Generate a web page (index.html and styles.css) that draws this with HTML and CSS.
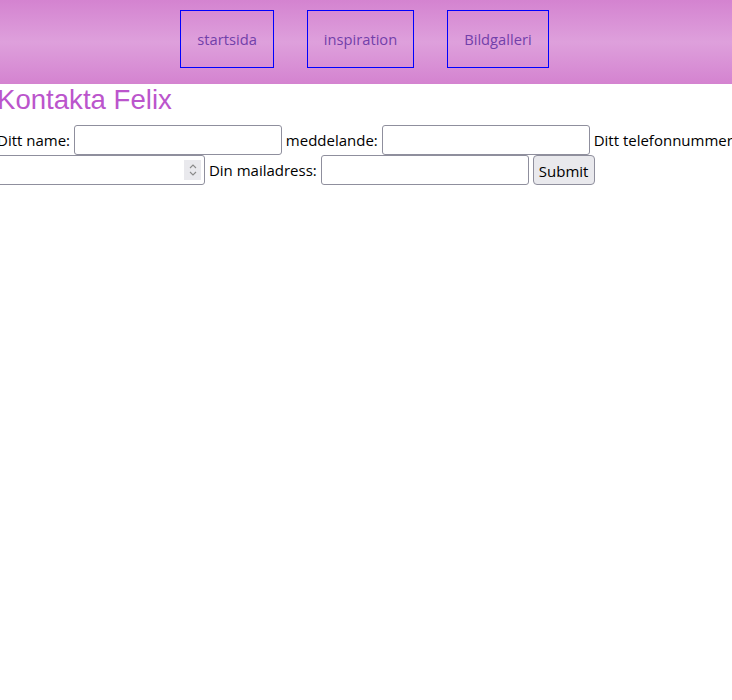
FILE: index.html
```html
<!DOCTYPE html>
<html lang="sv">
<head>
<meta charset="utf-8">
<title>Kontakta Felix</title>
<link rel="stylesheet" href="styles.css">
</head>
<body>
<nav class="topnav">
  <a class="navlink" href="#">startsida</a>
  <a class="navlink" href="#">inspiration</a>
  <a class="navlink" href="#">Bildgalleri</a>
</nav>
<main class="content">
  <h1 class="title">Kontakta Felix</h1>
  <form class="contact">
    <label class="lbl">Ditt name:</label> <input class="field" type="text">
    <label class="lbl">meddelande:</label> <input class="field" type="text">
    <label class="lbl">Ditt telefonnummer:</label> <span class="numwrap"><input class="field num" type="text"><span class="spin"><svg width="10" height="16" viewBox="0 0 10 16"><path d="M2 6 L5 3 L8 6" fill="none" stroke="#8a8a8a" stroke-width="1.1"/><path d="M2 10 L5 13 L8 10" fill="none" stroke="#8a8a8a" stroke-width="1.1"/></svg></span></span>
    <label class="lbl">Din mailadress:</label> <input class="field" type="text">
    <button class="btn" type="button">Submit</button>
  </form>
</main>
</body>
</html>
```
FILE: styles.css
```css
html { overflow: hidden; }
body {
  margin: 0;
  font-family: "Open Sans", "Noto Sans", sans-serif;
  background: #fff;
}
.topnav {
  height: 84px;
  display: flex;
  justify-content: center;
  align-items: flex-start;
  gap: 33px;
  padding-top: 10px;
  box-sizing: border-box;
  background: linear-gradient(to bottom, #d483d0 0%, #dea0dc 50%, #d483d0 100%);
  margin-left: -3px;
}
.navlink {
  display: block;
  border: 1px solid #0000ff;
  height: 58px;
  box-sizing: border-box;
  padding: 0 16px;
  line-height: 56px;
  font-size: 14.7px;
  color: #7240aa;
  text-decoration: none;
}
.content {
  margin-left: -3px;
}
.title {
  margin: 0;
  font-family: "Liberation Sans", Arial, sans-serif;
  font-weight: normal;
  font-size: 27.6px;
  line-height: 32px;
  color: #bb55cc;
}
.contact {
  width: 770px;
  margin-top: 9px;
  font-size: 15px;
  line-height: 30px;
  color: #000;
}
.field {
  width: 208px;
  height: 30px;
  box-sizing: border-box;
  border: 1px solid #8f8f9d;
  border-radius: 3px;
  vertical-align: top;
  font: inherit;
  margin: 0;
  padding: 0 4px;
}
.numwrap {
  display: inline-block;
  position: relative;
  vertical-align: top;
  height: 30px;
  line-height: 0;
}
.spin {
  position: absolute;
  right: 4px;
  top: 5px;
  width: 17px;
  height: 20px;
  background: #e9e9ed;
  display: flex;
  align-items: center;
  justify-content: center;
}
.btn {
  height: 30px;
  width: 62px;
  padding: 0;
  font: inherit;
  font-size: 15px;
  background: #e9e9ed;
  border: 1px solid #8f8f9d;
  border-radius: 4px;
  vertical-align: top;
  color: #000;
}
```
